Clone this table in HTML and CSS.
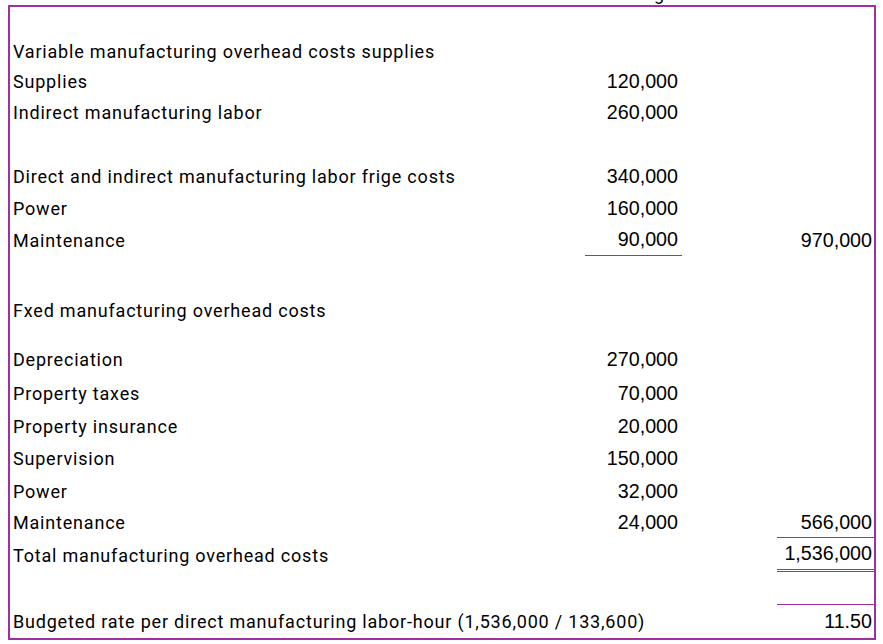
FILE: index.html
```html
<!DOCTYPE html>
<html lang="en">
<head>
<meta charset="utf-8">
<title>Manufacturing overhead budget</title>
<link rel="stylesheet" href="styles.css">
</head>
<body>
<div class="title-strip"><span class="title-cut">g</span></div>
<div class="sheet">
  <div class="row h29"><div class="lbl"></div><div class="num"></div><div></div><div class="tot"></div></div>
  <div class="row h30"><div class="lbl">Variable manufacturing overhead costs supplies</div><div class="num"></div><div></div><div class="tot"></div></div>
  <div class="row h30"><div class="lbl">Supplies</div><div class="num">120,000</div><div></div><div class="tot"></div></div>
  <div class="row h32"><div class="lbl">Indirect manufacturing labor</div><div class="num">260,000</div><div></div><div class="tot"></div></div>
  <div class="row h32"><div class="lbl"></div><div class="num"></div><div></div><div class="tot"></div></div>
  <div class="row h32"><div class="lbl">Direct and indirect manufacturing labor frige costs</div><div class="num">340,000</div><div></div><div class="tot"></div></div>
  <div class="row h32"><div class="lbl">Power</div><div class="num">160,000</div><div></div><div class="tot"></div></div>
  <div class="row h32"><div class="lbl">Maintenance</div><div class="num rule">90,000</div><div></div><div class="tot">970,000</div></div>
  <div class="row h36"><div class="lbl"></div><div class="num"></div><div></div><div class="tot"></div></div>
  <div class="row h36"><div class="lbl">Fxed manufacturing overhead costs</div><div class="num"></div><div></div><div class="tot"></div></div>
  <div class="row h14"><div class="lbl"></div><div class="num"></div><div></div><div class="tot"></div></div>
  <div class="row h34"><div class="lbl">Depreciation</div><div class="num">270,000</div><div></div><div class="tot"></div></div>
  <div class="row h35"><div class="lbl">Property taxes</div><div class="num">70,000</div><div></div><div class="tot"></div></div>
  <div class="row h31"><div class="lbl">Property insurance</div><div class="num">20,000</div><div></div><div class="tot"></div></div>
  <div class="row h33"><div class="lbl">Supervision</div><div class="num">150,000</div><div></div><div class="tot"></div></div>
  <div class="row h32"><div class="lbl">Power</div><div class="num">32,000</div><div></div><div class="tot"></div></div>
  <div class="row h31"><div class="lbl">Maintenance</div><div class="num">24,000</div><div></div><div class="tot rule">566,000</div></div>
  <div class="row h34"><div class="lbl">Total manufacturing overhead costs</div><div class="num"></div><div></div><div class="tot rule-double">1,536,000</div></div>
  <div class="row h33"><div class="lbl"></div><div class="num"></div><div></div><div class="tot rule"></div></div>
  <div class="row h33"><div class="lbl">Budgeted rate per direct manufacturing labor-hour (1,536,000 / 133,600)</div><div class="num"></div><div></div><div class="tot">11.50</div></div>
</div>
</body>
</html>
```

FILE: styles.css
```css
html, body {
  margin: 0;
  padding: 0;
  background: #ffffff;
}

body {
  width: 883px;
  height: 644px;
  overflow: hidden;
  color: #000000;
}

.title-strip {
  height: 5px;
  overflow: hidden;
  position: relative;
}

.title-cut {
  position: absolute;
  left: 654px;
  top: -15px;
  font-family: "Roboto", "Liberation Sans", sans-serif;
  font-size: 18px;
  line-height: 18px;
}

.sheet {
  margin-left: 8px;
  width: 864px;
  border: 2px solid #a0309f;
}

.row {
  display: grid;
  grid-template-columns: 575px 97px 95px 97px;
}

.h14 { height: 14px; }
.h29 { height: 29px; }
.h30 { height: 30px; }
.h31 { height: 31px; }
.h32 { height: 32px; }
.h33 { height: 33px; }
.h34 { height: 34px; }
.h35 { height: 35px; }
.h36 { height: 36px; }

.lbl,
.num,
.tot {
  display: flex;
  align-items: center;
  box-sizing: border-box;
  white-space: nowrap;
}

.lbl {
  padding-left: 3px;
  font-family: "Roboto", "Liberation Sans", sans-serif;
  font-size: 18px;
  letter-spacing: 0.8px;
}

.num,
.tot {
  justify-content: flex-end;
  font-family: "Liberation Sans", Arial, sans-serif;
  font-size: 19.7px;
}

.num {
  padding-right: 4px;
}

.tot {
  padding-right: 2px;
}

.rule {
  border-bottom: 1px solid #a0309f;
}

.rule-double {
  border-bottom: 3px double #a0309f;
}
```
